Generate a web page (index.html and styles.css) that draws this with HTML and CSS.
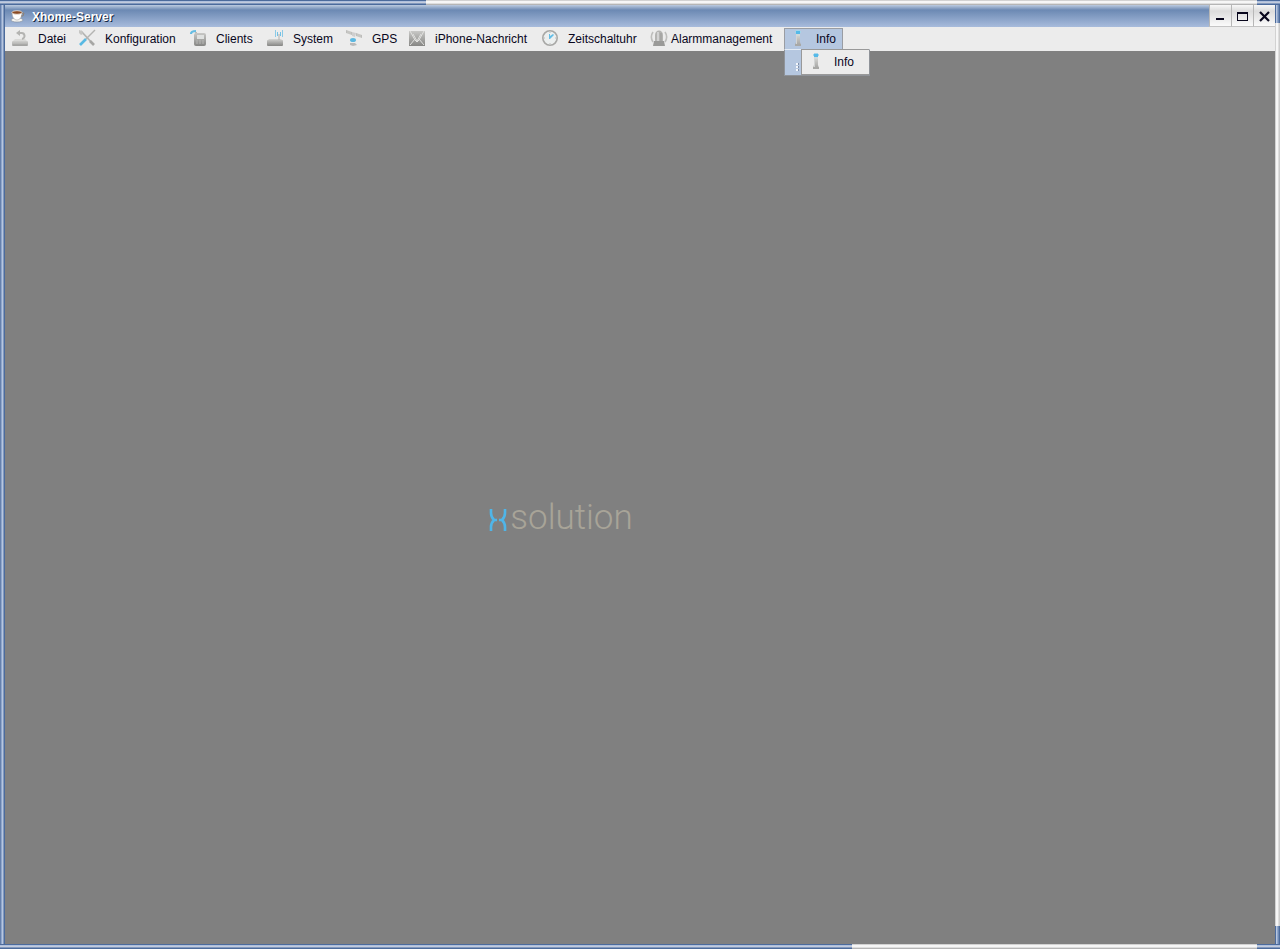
FILE: index.html
```html
<!DOCTYPE html>
<html lang="de">
<head>
<meta charset="utf-8">
<title>Xhome-Server</title>
<link rel="stylesheet" href="styles.css">
</head>
<body>
<svg class="defs" aria-hidden="true">
  <defs>
    <linearGradient id="metal" x1="0" y1="0" x2="0" y2="1"><stop offset="0" stop-color="#c8c8c6"/><stop offset="1" stop-color="#868684"/></linearGradient>
    <linearGradient id="pale" x1="0" y1="0" x2="0" y2="1"><stop offset="0" stop-color="#d0d0ce"/><stop offset="1" stop-color="#a4a4a2"/></linearGradient>
    <symbol id="info" viewBox="0 0 18 18"><path d="M7 2h4v3H7z" fill="#55b9e8"/><path d="M6 2h1v2H6zM11 2h1v2h-1zM7 1h4v1H7z" fill="#a4d4ea"/><path d="M7 5h4v2H7z" fill="#d0d8da"/><path d="M7 7h4v6l1 3H6l1-3z" fill="url(#pale)"/><path d="M7 7h1v8H7z" fill="#d2d4d4"/><path d="M6 15h6v2H6z" fill="#a8a8a6"/></symbol>
  </defs>
</svg>
<div class="window">
  <header class="titlebar">
    <svg class="cup" viewBox="0 0 16 16" aria-hidden="true"><ellipse cx="7" cy="12" rx="6" ry="2" fill="#f4f4f2" stroke="#7c8794" stroke-width=".6"/><path d="M2 4h10c0 5-2 8-5 8S2 9 2 4z" fill="#fff" stroke="#a8a49e" stroke-width=".6"/><path d="M12 5h2l-1 3h-2" fill="none" stroke="#8d8278"/><ellipse cx="7" cy="4.500" rx="5" ry="1.800" fill="#8a4a24" stroke="#efe8de" stroke-width=".8"/></svg>
    <h1 class="title">Xhome-Server</h1>
    <div class="controls">
      <button class="control" type="button" aria-label="Minimieren"><svg viewBox="0 0 21 22"><path d="M6 13h8v2H6z" fill="#08061c"/></svg></button>
      <button class="control" type="button" aria-label="Maximieren"><svg viewBox="0 0 21 22"><path d="M5 7h11v9H5zM6 9v6h9V9z" fill="#08061c" fill-rule="evenodd"/></svg></button>
      <button class="control" type="button" aria-label="Schließen"><svg viewBox="0 0 21 22"><path d="M6 7l9 9M15 7l-9 9" stroke="#08061c" stroke-width="2.2"/></svg></button>
    </div>
  </header>
  <nav class="menubar">
    <button class="menu" type="button"><svg class="icon" viewBox="0 0 18 18" aria-hidden="true"><path d="M4 10l-2 2h14l-2-2z" fill="#dadad8"/><rect x="1" y="12" width="16" height="5" rx="1" fill="url(#pale)"/><path d="M2 16h14" stroke="#a0a09e"/><path d="M8 4h2a3 3 0 011 6" fill="none" stroke="#b4b4b2" stroke-width="2"/><path d="M5 4l4-3v6z" fill="#b4b4b2"/></svg>Datei</button>
    <button class="menu" type="button"><svg class="icon" viewBox="0 0 18 18" aria-hidden="true"><path d="M3 2l12 13" stroke="#b4b4b2" stroke-width="1.8"/><path d="M1 1l3 1 1 3-2 1-2-2z" fill="#c6c6c4"/><path d="M12 12l4 4" stroke="#a6a6a4" stroke-width="2.6"/><path d="M17 1L8 10" stroke="#b4b4b2" stroke-width="1.4"/><path d="M8 10l-6 6" stroke="#58b9e3" stroke-width="2.6"/></svg>Konfiguration</button>
    <button class="menu" type="button"><svg class="icon" viewBox="0 0 18 18" aria-hidden="true"><path d="M2 5c0-2 2-3 5-3" fill="none" stroke="#65bce2" stroke-width="2.2"/><path d="M6 3h2v4H6z" fill="#bcbcba"/><rect x="5" y="4" width="12" height="13" rx="2" fill="url(#metal)"/><rect x="8" y="6" width="7" height="4" fill="#dfe1e0"/><path d="M7 12h2m1 0h2m1 0h2M7 14h2m1 0h2m1 0h2" stroke="#b8b8b6"/></svg>Clients</button>
    <button class="menu" type="button"><svg class="icon" viewBox="0 0 18 18" aria-hidden="true"><path d="M3 10h12l2 2H1z" fill="#d0d0ce"/><rect x="1" y="11" width="16" height="6" rx="1" fill="url(#metal)"/><path d="M13 5v6" stroke="#b0b0ae"/><path d="M11.500 3v4M14.500 3v4" stroke="#72c2e6"/><path d="M9.500 1v7M16.500 1v7" stroke="#8ccae6"/></svg>System</button>
    <button class="menu" type="button"><svg class="icon" viewBox="0 0 18 18" aria-hidden="true"><path d="M1 1l6 2v3L1 4zM11 4l6 2v3l-6-2z" fill="#bdbdbb"/><path d="M3 2v3M5 2v4M13 5v3M15 5v4" stroke="#e0e0de" stroke-width=".5"/><path d="M7 3l4 1-1 4-3-1z" fill="#cecece"/><ellipse cx="8" cy="11" rx="3" ry="2" fill="#5cb8e1"/><path d="M5 14l5 0 2 2-4 1-3-1z" fill="#bababa"/></svg>GPS</button>
    <button class="menu" type="button"><svg class="icon" viewBox="0 0 18 18" aria-hidden="true"><rect x="1" y="2" width="16" height="15" fill="url(#metal)"/><path d="M2 2l5 9 2 2 2-2 5-9M2 16l5-6M16 16l-5-6M5 5l4 7 4-7" fill="none" stroke="#e1e1df"/></svg>iPhone-Nachricht</button>
    <button class="menu" type="button"><svg class="icon" viewBox="0 0 18 18" aria-hidden="true"><circle cx="9" cy="9" r="7.200" fill="#ecefef" stroke="#a8a8a6" stroke-width="1.600"/><path d="M9 3v1M9 14v1M3 9h1M14 9h1" stroke="#bcbcbc"/><path d="M8 5h1v2l3-2 1 1-4 4H8z" fill="#63bde6"/></svg>Zeitschaltuhr</button>
    <button class="menu tight" type="button"><svg class="icon" viewBox="0 0 18 18" aria-hidden="true"><path d="M5 13V6c0-6 8-6 8 0v7z" fill="#b4b4b2"/><path d="M8 3v9" stroke="#dedede" stroke-width="1.500"/><path d="M11 4v8" stroke="#999997"/><path d="M4 12h10l1 5H3z" fill="#9a9a98"/><path d="M3 3c-2 3-2 7 0 10M15 3c2 3 2 7 0 10" fill="none" stroke="#bebebc" stroke-width="1.600"/></svg>Alarmmanagement</button>
    <div class="menu-group">
      <button class="menu active" type="button" aria-expanded="true"><svg class="icon" aria-hidden="true"><use href="#info"/></svg>Info</button>
      <div class="popup">
        <div class="grip" aria-hidden="true"><i></i><i></i><i></i></div>
        <button class="popup-item" type="button"><svg class="icon" aria-hidden="true"><use href="#info"/></svg>Info</button>
      </div>
    </div>
  </nav>
  <main class="desktop">
    <div class="brand"><svg class="mark" viewBox="0 0 18 24" aria-hidden="true"><path d="M2 1v4q0 4 3 7-3 3-3 7v4M16 1v4q0 4-3 7 3 3 3 7v4M4 12h4M10 12h4" fill="none" stroke="#4fb5e8" stroke-width="2.600"/></svg><span class="brand-name">solution</span></div>
  </main>
</div>
</body>
</html>
```

FILE: styles.css
```css
* { box-sizing: border-box; }

body {
  margin: 0;
  font: 12px/16px "Liberation Sans", Arial, sans-serif;
  color: #08061c;
}

button {
  margin: 0;
  border: 0;
  padding: 0;
  background: none;
  font: inherit;
  color: inherit;
}

.defs { position: absolute; width: 0; height: 0; }

.window {
  --blue-h: linear-gradient(#4c6b9c 0 1px, #aebfdc 1px 2px, #c3cbdc 2px 3px, #8198bd 3px 4px, #4c6b9c 4px 5px);
  --blue-v: linear-gradient(90deg, #6580ad 0 1px, #8fa6cb 1px 2px, #b7c6df 2px 3px, #8198bd 3px 4px, #4c6b9c 4px 5px);
  --blue-r: linear-gradient(90deg, #4c6b9c 0 1px, #b7c6df 1px 2px, #8fa6cb 2px 3px, #6f8ab4 3px 4px, #4c6b9c 4px 5px);
  --light-h: linear-gradient(#d2d2d2 0 1px, #f6f6f6 1px 3px, #dedede 3px 4px, #b5b5b5 4px 5px);
  --light-v: linear-gradient(90deg, #d2d2d2 0 1px, #f6f6f6 1px 3px, #dedede 3px 4px, #cccccc 4px 5px);
  display: flex;
  flex-direction: column;
  min-height: 100vh;
  padding: 5px;
  background:
    var(--blue-h) right top / 23px 5px no-repeat,
    var(--blue-h) right bottom / 23px 5px no-repeat,
    var(--blue-h) left top / 33.3% 5px no-repeat,
    var(--blue-h) left bottom / 66.6% 5px no-repeat,
    var(--light-h) left top / 100% 5px no-repeat,
    var(--light-h) left bottom / 100% 5px no-repeat,
    var(--blue-v) left top / 5px 100% no-repeat,
    var(--blue-r) right top / 5px 23px no-repeat,
    var(--blue-r) right bottom / 5px 23px no-repeat,
    var(--light-v) right top / 5px 100% no-repeat;
}

.titlebar {
  display: flex;
  align-items: center;
  height: 22px;
  padding-left: 5px;
  background: linear-gradient(#bccbe0 0, #6c89b3 5px, #a7bbdc 100%);
}

.cup { width: 16px; height: 16px; }

.title {
  flex: 1;
  margin: 0 0 0 6px;
  padding-top: 2px;
  font-size: 12px;
  line-height: 20px;
  color: #fff;
  text-shadow: 1px 1px #10233f;
}

.controls { display: flex; }

.control {
  width: 22px;
  height: 22px;
  border-left: 1px solid #b7b7b7;
  border-bottom: 1px solid #c4c4c4;
  background: linear-gradient(#f8f8f8, #dcdcdc 6px, #fafafa 100%);
}

.control svg { display: block; width: 21px; height: 22px; }

.menubar {
  display: grid;
  grid-template-columns: 67px 111px 77px 79px 63px 133px 109px 133px max-content;
  height: 24px;
  padding-left: 6px;
  background: #ececec;
}

.menu {
  display: flex;
  align-items: center;
  gap: 9px;
  height: 24px;
  white-space: nowrap;
}

.icon { flex: none; width: 18px; height: 18px; margin-bottom: 2px; }

.tight { gap: 3px; }

.menu-group { position: relative; padding-left: 1px; }

.active {
  height: 23px;
  margin: 1px 0 0;
  padding: 0 6px 1px 4px;
  border: 1px solid #9a9da3;
  background: #b5c7e0;
}

.popup {
  position: absolute;
  top: 22px;
  left: 1px;
  display: flex;
  height: 27px;
  border: 1px solid #8f9399;
  border-top-color: #e3ebf5;
  background: #b5c7e0;
}

.grip {
  display: flex;
  flex-direction: column;
  align-items: flex-end;
  justify-content: flex-end;
  gap: 1px;
  width: 16px;
  padding: 0 2px 4px 0;
}

.grip i { width: 3px; height: 2px; background: #f3f6fb; border-right: 1px solid #8090aa; }

.popup-item {
  display: flex;
  align-items: center;
  gap: 9px;
  margin-top: -1px;
  padding: 0 15px 0 5px;
  border: solid #999;
  border-width: 1px 0 1px 1px;
  background: #ececec;
}

.desktop {
  flex: 1;
  display: flex;
  align-items: center;
  justify-content: center;
  padding: 40px 158px 0 0;
  background: #808080;
}

.brand { display: flex; align-items: flex-end; gap: 3px; }

.mark { width: 18px; height: 24px; margin-bottom: 2px; }

.brand-name {
  font: 300 35px/32px Roboto, "Open Sans", sans-serif;
  color: #a8a498;
}
```
